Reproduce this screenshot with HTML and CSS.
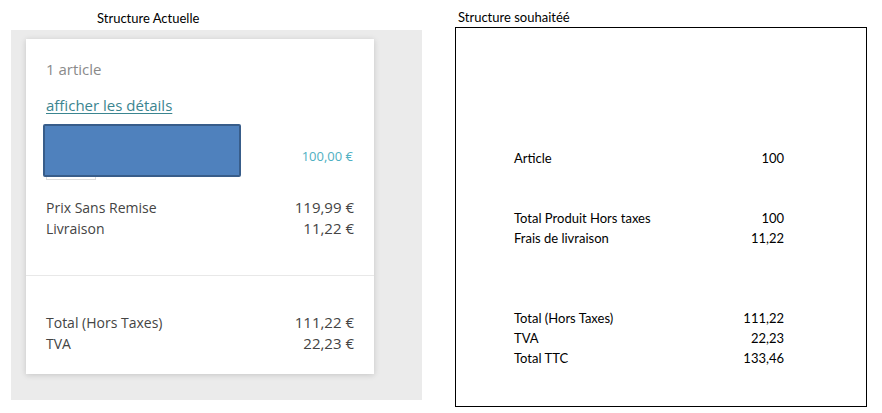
FILE: index.html
```html
<!DOCTYPE html>
<html lang="fr">
<head>
<meta charset="utf-8">
<title>Structure</title>
<link rel="stylesheet" href="styles.css">
</head>
<body>
<div class="page">
  <section class="current">
    <div class="caption caption-left">Structure Actuelle</div>
    <div class="panel">
      <div class="card">
        <div class="card-top">
          <div class="count">1 article</div>
          <a class="details" href="#">afficher les détails</a>
          <div class="item">
            <div class="thumb"></div>
            <div class="redact"></div>
            <div class="item-price">100,00 €</div>
          </div>
          <div class="lines">
            <div class="line"><span>Prix Sans Remise</span><span class="val">119,99 €</span></div>
            <div class="line"><span>Livraison</span><span class="val">11,22 €</span></div>
          </div>
        </div>
        <div class="card-bottom">
          <div class="line"><span>Total (Hors Taxes)</span><span class="val">111,22 €</span></div>
          <div class="line"><span>TVA</span><span class="val">22,23 €</span></div>
        </div>
      </div>
    </div>
  </section>
  <section class="wanted">
    <div class="caption caption-right">Structure souhaitéé</div>
    <div class="box">
      <div class="group">
        <div class="row"><span>Article</span><span>100</span></div>
      </div>
      <div class="group g2">
        <div class="row"><span>Total Produit Hors taxes</span><span>100</span></div>
        <div class="row"><span>Frais de livraison</span><span>11,22</span></div>
      </div>
      <div class="group g3">
        <div class="row"><span>Total (Hors Taxes)</span><span>111,22</span></div>
        <div class="row"><span>TVA</span><span>22,23</span></div>
        <div class="row"><span>Total TTC</span><span>133,46</span></div>
      </div>
    </div>
  </section>
</div>
</body>
</html>
```
FILE: styles.css
```css
* { box-sizing: border-box; }
html, body { margin: 0; padding: 0; background: #fff; }
body { width: 882px; height: 413px; overflow: hidden; }

.page {
  display: flex;
  align-items: flex-start;
}

.caption {
  font-family: Lato, "Liberation Sans", sans-serif;
  font-size: 13px;
  color: #000;
  line-height: 16px;
}

.current {
  margin-left: 11px;
  width: 411px;
}
.caption-left {
  height: 30px;
  padding-top: 10px;
  padding-left: 86px;
}
.panel {
  background: #ebebeb;
  height: 370px;
  padding: 9px 48px 0 15px;
}
.card {
  background: #fff;
  height: 335px;
  box-shadow: 0 1px 6px rgba(0,0,0,0.16);
  font-family: "Open Sans", "Liberation Sans", sans-serif;
  color: #444;
  display: flex;
  flex-direction: column;
}
.card-top {
  padding: 20px 20px 36px 20px;
  display: flex;
  flex-direction: column;
}
.count {
  font-size: 15px;
  line-height: 20px;
  color: #8a8a8a;
}
.details {
  margin-top: 16px;
  font-size: 15px;
  line-height: 20px;
  color: #3b8590;
  text-decoration: underline;
  text-underline-offset: 2px;
  align-self: flex-start;
}
.item {
  position: relative;
  margin-top: 9px;
  height: 56px;
  display: flex;
  justify-content: space-between;
  align-items: flex-start;
}
.thumb {
  width: 50px;
  height: 53px;
  margin-top: 3px;
  border: 1px solid #dcdcdc;
}
.redact {
  position: absolute;
  left: -3px;
  top: 0;
  width: 198px;
  height: 53px;
  background: #4f81bd;
  border: 2px solid #385d8a;
  border-radius: 2px;
}
.item-price {
  margin-top: 22px;
  font-size: 13px;
  line-height: 20px;
  color: #4fb0c2;
  padding-right: 1px;
}
.lines { margin-top: 17px; }
.line {
  display: flex;
  justify-content: space-between;
  align-items: baseline;
  font-size: 14px;
  line-height: 21px;
}
.val { font-size: 15px; }
.card-bottom {
  border-top: 1px solid #e8e8e8;
  padding: 36px 20px 0 20px;
}

.wanted {
  margin-left: 33px;
}
.caption-right {
  height: 27px;
  padding-top: 9px;
  padding-left: 3px;
}
.box {
  width: 412px;
  height: 380px;
  border: 1px solid #000;
  padding: 120px 0 0 58px;
  font-family: Lato, "Liberation Sans", sans-serif;
  font-size: 13px;
  color: #000;
}
.group { width: 270px; }
.g2 { margin-top: 40px; }
.g3 { margin-top: 60px; }
.row {
  display: flex;
  justify-content: space-between;
  line-height: 20px;
}
```
